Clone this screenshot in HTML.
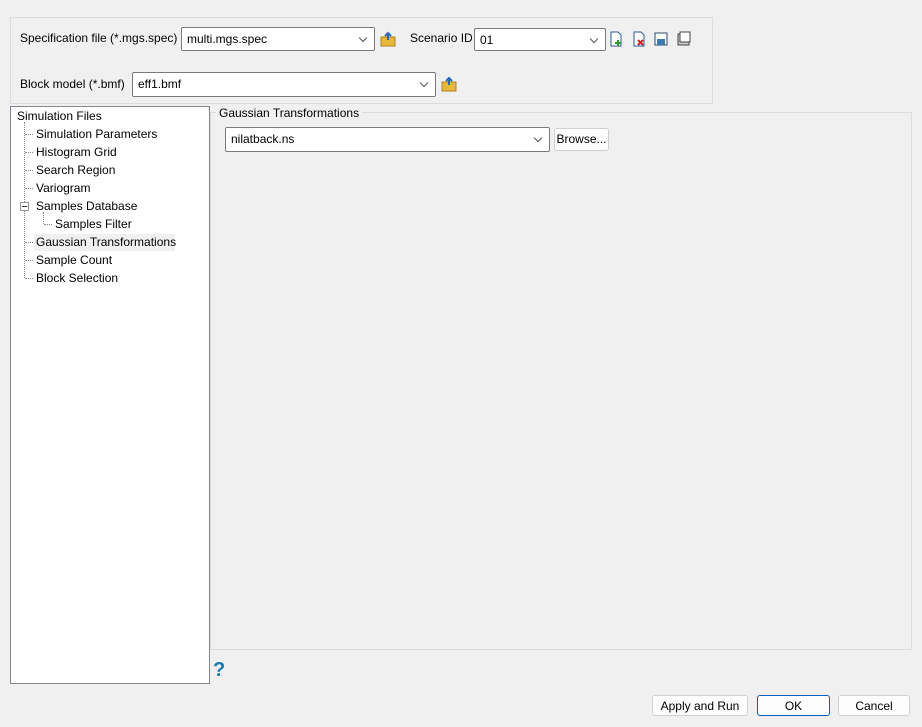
<!DOCTYPE html>
<html><head><meta charset="utf-8"><style>
*{box-sizing:border-box;margin:0;padding:0}
body{width:922px;height:727px;background:#f0f0f0;font-family:"Liberation Sans",sans-serif;font-size:12px;color:#000;position:relative;overflow:hidden}
.a{position:absolute;white-space:nowrap}
.box{position:absolute;border:1px solid #dcdcdc}
.combo{position:absolute;background:#fff;border:1px solid #7a7a7a;border-radius:2px;padding-left:5px;line-height:22px}
.combo::after{content:"";position:absolute;right:8px;top:7px;width:5px;height:5px;border-right:1px solid #555;border-bottom:1px solid #555;transform:rotate(45deg)}
.btn{position:absolute;background:#fdfdfd;border:1px solid #d0d0d0;border-radius:3px;text-align:center;line-height:20px}
.tree div{position:absolute;white-space:nowrap}
.dh{position:absolute;border-top:1px dotted #888;width:8px}
</style></head><body>
<div class="box" style="left:10px;top:17px;width:703px;height:87px"></div>
<div class="a" style="left:20px;top:31px">Specification file (*.mgs.spec)</div>
<div class="combo" style="left:181px;top:27px;width:194px;height:24px">multi.mgs.spec</div>
<svg class="a" style="left:380px;top:31px" width="16" height="16"><rect x="1" y="6" width="14" height="9" fill="#e8b83a" stroke="#b08020"/><path d="M8 9V2M5 5l3-3 3 3" stroke="#2a6ab0" stroke-width="2" fill="none"/></svg>
<div class="a" style="left:410px;top:31px">Scenario ID</div>
<div class="combo" style="left:474px;top:28px;width:132px;height:23px">01</div>
<svg class="a" style="left:610px;top:31px" width="90" height="16"><path d="M1 1h7l3 3v11H1z" fill="#fff" stroke="#2a5a90"/><path d="M8 9v6M5 12h6" stroke="#2a9a2a" stroke-width="2"/><path d="M24 1h7l3 3v11H24z" fill="#fff" stroke="#2a5a90"/><path d="M28 9l5 5M33 9l-5 5" stroke="#d02020" stroke-width="2"/><rect x="45" y="2" width="12" height="12" fill="#fff" stroke="#2a4a70"/><rect x="47" y="8" width="8" height="6" fill="#3a7ab0"/><rect x="68" y="3" width="11" height="11" fill="#ccc" stroke="#444"/><rect x="70" y="1" width="10" height="10" fill="#fff" stroke="#444"/></svg>
<div class="a" style="left:20px;top:77px">Block model (*.bmf)</div>
<div class="combo" style="left:132px;top:72px;width:304px;height:25px">eff1.bmf</div>
<svg class="a" style="left:441px;top:76px" width="16" height="16"><rect x="1" y="6" width="14" height="9" fill="#e8b83a" stroke="#b08020"/><path d="M8 9V2M5 5l3-3 3 3" stroke="#2a6ab0" stroke-width="2" fill="none"/></svg>

<div class="a" style="left:10px;top:106px;width:200px;height:578px;background:#fff;border:1px solid #828790"></div>
<div class="tree">
<div style="left:17px;top:109px">Simulation Files</div>
<div style="position:absolute;left:24px;top:122px;height:156px;border-left:1px dotted #888"></div>
<div class="dh" style="left:25px;top:134px"></div><div style="left:36px;top:127px">Simulation Parameters</div>
<div class="dh" style="left:25px;top:152px"></div><div style="left:36px;top:145px">Histogram Grid</div>
<div class="dh" style="left:25px;top:170px"></div><div style="left:36px;top:163px">Search Region</div>
<div class="dh" style="left:25px;top:188px"></div><div style="left:36px;top:181px">Variogram</div>
<div style="left:20px;top:202px;width:9px;height:9px;border:1px solid #999;background:#fff"></div><div style="left:22px;top:206px;width:5px;border-top:1px solid #333"></div>
<div style="left:36px;top:199px">Samples Database</div>
<div style="position:absolute;left:43px;top:212px;height:12px;border-left:1px dotted #888"></div>
<div class="dh" style="left:44px;top:224px"></div><div style="left:55px;top:217px">Samples Filter</div>
<div class="dh" style="left:25px;top:242px"></div><div style="left:34px;top:234px;width:141px;height:17px;background:#f0f0f0"></div><div style="left:36px;top:235px">Gaussian Transformations</div>
<div class="dh" style="left:25px;top:260px"></div><div style="left:36px;top:253px">Sample Count</div>
<div class="dh" style="left:25px;top:278px"></div><div style="left:36px;top:271px">Block Selection</div>
</div>

<div class="box" style="left:210px;top:112px;width:702px;height:538px"></div>
<div class="a" style="left:216px;top:106px;background:#f0f0f0;padding:0 3px">Gaussian Transformations</div>
<div class="combo" style="left:225px;top:127px;width:325px;height:25px">nilatback.ns</div>
<div class="btn" style="left:554px;top:128px;width:55px;height:23px">Browse...</div>
<div class="a" style="left:213px;top:659px;font-size:20px;font-weight:bold;color:#1a7ab0">?</div>
<div class="btn" style="left:652px;top:695px;width:96px;height:21px">Apply and Run</div>
<div class="btn" style="left:757px;top:695px;width:73px;height:21px;border:1px solid #0060c0">OK</div>
<div class="btn" style="left:838px;top:695px;width:72px;height:21px">Cancel</div>
</body></html>
